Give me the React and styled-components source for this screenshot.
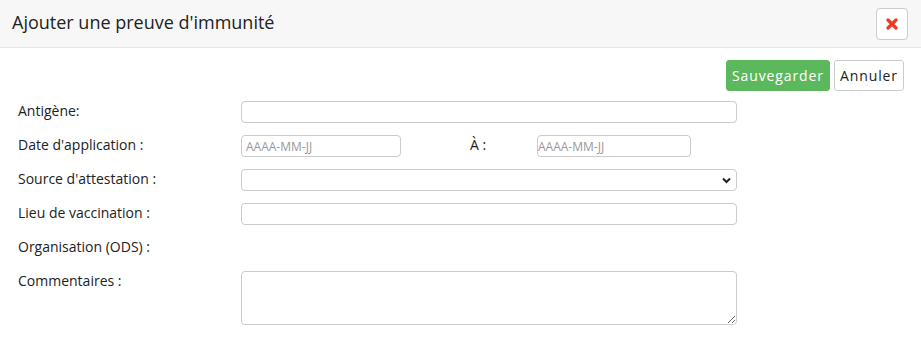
import styled, { createGlobalStyle } from "styled-components";

const GlobalStyle = createGlobalStyle`
  * { box-sizing: border-box; }
  body {
    margin: 0;
    background: #fff;
    font-family: "Open Sans", "Liberation Sans", sans-serif;
    color: #333;
  }
`;

const Modal = styled.div`
  width: 921px;
  min-height: 339px;
  background: #fff;
`;

const Header = styled.div`
  height: 48px;
  background: #f7f7f7;
  border-bottom: 1px solid #e6e6e6;
  display: flex;
  align-items: center;
  justify-content: space-between;
  padding: 0 13px 0 12px;
`;

const Title = styled.h4`
  margin: 0;
  font-size: 18px;
  font-weight: 400;
  color: #222;
  padding-bottom: 4px;
`;

const CloseButton = styled.button`
  width: 32px;
  height: 32px;
  margin-top: 1px;
  border: 1px solid #ccc;
  border-radius: 4px;
  background: #fff;
  display: flex;
  align-items: center;
  justify-content: center;
  padding: 0;
`;

const Body = styled.div`
  padding: 12px 17px 0 18px;
`;

const Actions = styled.div`
  display: flex;
  justify-content: flex-end;
  gap: 4px;
  margin-bottom: 10px;
`;

const Button = styled.button`
  height: 31px;
  padding: 0 5px;
  font-family: "Open Sans", sans-serif;
  font-size: 14px;
  letter-spacing: 0.9px;
  border-radius: 3px;
  border: 1px solid ${(p) => (p.$primary ? "#5cb85c" : "#ccc")};
  background: ${(p) => (p.$primary ? "#5cb85c" : "#fff")};
  color: ${(p) => (p.$primary ? "#fff" : "#222")};
`;

const Form = styled.div`
  display: flex;
  flex-direction: column;
  gap: 12px;
`;

const Row = styled.div`
  display: grid;
  grid-template-columns: 223px 496px;
  align-items: start;
  min-height: 22px;
`;

const Label = styled.label`
  font-size: 14px;
  line-height: 20px;
  color: #222;
`;

const Input = styled.input`
  display: block;
  width: ${(p) => p.$width || "100%"};
  height: 22px;
  border: 1px solid #ccc;
  border-radius: 4px;
  padding: 0 ${(p) => (p.$flush ? "0" : "4px")};
  font-family: "Open Sans", sans-serif;
  font-size: 12px;
  outline: none;
  &::placeholder {
    color: #999;
  }
`;

const DateGroup = styled.div`
  display: flex;
  align-items: start;
`;

const ToLabel = styled(Label)`
  margin-left: 69px;
  width: 67px;
`;

const SelectWrap = styled.div`
  position: relative;
  height: 22px;
`;

const Select = styled.select`
  display: block;
  width: 100%;
  height: 22px;
  border: 1px solid #ccc;
  border-radius: 4px;
  background: #fff;
  appearance: none;
  outline: none;
`;

const Chevron = styled.svg`
  position: absolute;
  right: 6px;
  top: 8px;
  pointer-events: none;
`;

const TextArea = styled.textarea`
  display: block;
  width: 100%;
  height: 54px;
  border: 1px solid #ccc;
  border-radius: 4px;
  outline: none;
  font-family: "Open Sans", sans-serif;
`;

export default function App() {
  return (
    <>
      <GlobalStyle />
      <Modal>
        <Header>
          <Title>Ajouter une preuve d'immunité</Title>
          <CloseButton aria-label="Fermer">
            <svg width="12" height="12" viewBox="0 0 12 12">
              <path d="M2 2 L10 10 M10 2 L2 10" stroke="#ee3a1f" strokeWidth="3.2" strokeLinecap="round" />
            </svg>
          </CloseButton>
        </Header>
        <Body>
          <Actions>
            <Button $primary>Sauvegarder</Button>
            <Button>Annuler</Button>
          </Actions>
          <Form>
            <Row>
              <Label>Antigène:</Label>
              <Input />
            </Row>
            <Row>
              <Label>Date d'application :</Label>
              <DateGroup>
                <Input $width="160px" placeholder="AAAA-MM-JJ" />
                <ToLabel>À :</ToLabel>
                <Input $width="154px" $flush placeholder="AAAA-MM-JJ" />
              </DateGroup>
            </Row>
            <Row>
              <Label>Source d'attestation :</Label>
              <SelectWrap>
                <Select />
                <Chevron width="9" height="7" viewBox="0 0 9 7">
                  <path d="M1 1.5 L4.5 5 L8 1.5" stroke="#222" strokeWidth="2" fill="none" />
                </Chevron>
              </SelectWrap>
            </Row>
            <Row>
              <Label>Lieu de vaccination :</Label>
              <Input />
            </Row>
            <Row>
              <Label>Organisation (ODS) :</Label>
            </Row>
            <Row>
              <Label>Commentaires :</Label>
              <TextArea />
            </Row>
          </Form>
        </Body>
      </Modal>
    </>
  );
}
